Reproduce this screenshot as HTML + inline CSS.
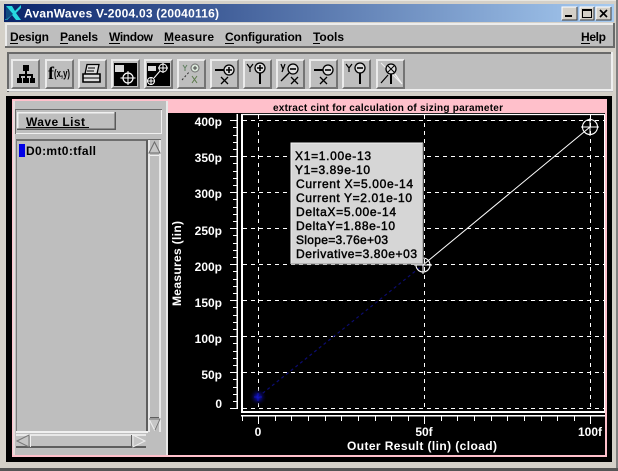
<!DOCTYPE html>
<html>
<head>
<meta charset="utf-8">
<title>AvanWaves</title>
<style>
html,body{margin:0;padding:0;background:#d4d0c8;width:618px;height:471px;overflow:hidden}
svg{display:block;position:absolute;left:0;top:0}
text{font-family:"Liberation Sans",sans-serif;font-weight:bold}
.m{font-size:12px;fill:#000}
.w{font-size:12px;fill:#fff}
.p{font-size:12px;fill:#000;font-weight:normal;stroke:#000;stroke-width:.45}
</style>
</head>
<body>
<svg width="618" height="471" viewBox="0 0 618 471" xmlns="http://www.w3.org/2000/svg">
<defs>
<linearGradient id="tb" x1="0" x2="1" y1="0" y2="0"><stop offset="0" stop-color="#0a246a"/><stop offset="1" stop-color="#a6caf0"/></linearGradient>
<radialGradient id="blob"><stop offset="0" stop-color="#1818d8"/><stop offset=".3" stop-color="#0a0a80"/><stop offset="1" stop-color="#000" stop-opacity="0"/></radialGradient>
<symbol id="bevel" width="29" height="30" overflow="visible">
<rect x="0" y="0" width="29" height="30" fill="#bebebe"/>
<path d="M0 0H29L27 2H2V28L0 30Z" fill="#ebebeb"/>
<path d="M29 0V30H0L2 28H27V2Z" fill="#747474"/>
</symbol>
</defs>

<!-- window -->
<rect width="618" height="471" fill="#d4d0c8"/>
<rect x="0" y="0" width="618" height="1" fill="#e8e6e0"/>
<rect x="616" y="0" width="2" height="471" fill="#808080"/>
<rect x="0" y="468" width="618" height="3" fill="#555"/>
<rect x="4" y="4" width="610" height="18" fill="url(#tb)"/>
<!-- logo -->
<path d="M6 6L12 6L15 11L21 5V8L16 13L21 20H16L12 15L7 20H5L11 13Z" fill="#27d8e0"/>
<path d="M6 6L13 14L6 20Z" fill="#0f4a80"/>
<text x="24" y="17.500" font-size="12" fill="#fff" textLength="195" lengthAdjust="spacing">AvanWaves V-2004.03 (20040116)</text>
<!-- window buttons -->
<g>
<path d="M562 7H577V20H562Z" fill="#d4d0c8"/>
<path d="M562 20V7H577" fill="none" stroke="#fff"/>
<path d="M577 7V20H562" fill="none" stroke="#404040"/>
<rect x="565" y="15" width="7" height="2" fill="#000"/>
<path d="M580 7H594V20H580Z" fill="#d4d0c8"/>
<path d="M580 20V7H594" fill="none" stroke="#fff"/>
<path d="M594 7V20H580" fill="none" stroke="#404040"/>
<rect x="582.500" y="9.500" width="9" height="8" fill="none" stroke="#000"/>
<rect x="582" y="9" width="10" height="2" fill="#000"/>
<path d="M596 7H611V20H596Z" fill="#d4d0c8"/>
<path d="M596 20V7H611" fill="none" stroke="#fff"/>
<path d="M611 7V20H596" fill="none" stroke="#404040"/>
<path d="M600 10L607 17M607 10L600 17" stroke="#000" stroke-width="1.600"/>
</g>

<!-- menu bar -->
<rect x="5" y="23" width="610" height="25" fill="#bebebe"/>
<rect x="5" y="23" width="610" height="2" fill="#ececec"/>
<rect x="5" y="23" width="2" height="25" fill="#ececec"/>
<rect x="5" y="46" width="610" height="2" fill="#6a6a6a"/>
<rect x="613" y="23" width="2" height="25" fill="#6a6a6a"/>
<text class="m" x="10" y="41" textLength="39">Design</text><rect x="10" y="43" width="8" height="1" fill="#000"/>
<text class="m" x="60" y="41" textLength="38">Panels</text><rect x="60" y="43" width="8" height="1" fill="#000"/>
<text class="m" x="109" y="41" textLength="44">Window</text><rect x="109" y="43" width="11" height="1" fill="#000"/>
<text class="m" x="164" y="41" textLength="50">Measure</text><rect x="164" y="43" width="10" height="1" fill="#000"/>
<text class="m" x="225" y="41" textLength="77">Configuration</text><rect x="225" y="43" width="9" height="1" fill="#000"/>
<text class="m" x="313" y="41" textLength="31">Tools</text><rect x="313" y="43" width="7" height="1" fill="#000"/>
<text class="m" x="581" y="41" textLength="25">Help</text><rect x="581" y="43" width="9" height="1" fill="#000"/>

<!-- toolbar -->
<rect x="7" y="52" width="606" height="40" fill="#bebebe"/>
<rect x="7" y="52" width="606" height="2" fill="#6a6a6a"/>
<rect x="7" y="52" width="2" height="40" fill="#6a6a6a"/>
<rect x="7" y="89" width="606" height="2" fill="#efefef"/>
<rect x="611" y="52" width="2" height="39" fill="#efefef"/>

<use href="#bevel" x="11" y="59"/>
<use href="#bevel" x="45" y="59"/>
<use href="#bevel" x="78" y="59"/>
<use href="#bevel" x="111" y="59"/>
<use href="#bevel" x="144" y="59"/>
<use href="#bevel" x="177" y="59"/>
<use href="#bevel" x="210" y="59"/>
<use href="#bevel" x="243" y="59"/>
<use href="#bevel" x="276" y="59"/>
<use href="#bevel" x="309" y="59"/>
<use href="#bevel" x="342" y="59"/>
<use href="#bevel" x="376" y="59"/>

<!-- tree icon -->
<g fill="#000">
<rect x="23" y="65" width="6" height="6"/><rect x="25" y="71" width="2" height="4"/>
<rect x="19" y="74" width="14" height="2"/><rect x="19" y="74" width="2" height="4"/><rect x="25" y="74" width="2" height="4"/><rect x="31" y="74" width="2" height="4"/>
<rect x="17" y="78" width="5" height="5"/><rect x="23" y="78" width="6" height="5"/><rect x="30" y="78" width="5" height="5"/>
</g>
<!-- f(x,y) -->
<text x="48" y="79" font-size="18" font-family="Liberation Serif" fill="#000" style="font-family:'Liberation Serif',serif">f</text>
<text x="54" y="77" font-size="11" fill="#000" textLength="16" lengthAdjust="spacingAndGlyphs">(x,y)</text>
<!-- printer -->
<g fill="none" stroke="#000" stroke-width="1.300">
<path d="M87 64.500H99L97 74H85Z" fill="#ddd"/>
<path d="M88 68H95M87 71H94" stroke-width="1"/>
<path d="M83 74H100V82H83Z" fill="#ddd" stroke-width="1.600"/>
<path d="M83 78H100" stroke-width="1"/>
</g>
<!-- black panels -->
<rect x="114" y="63" width="23" height="23" fill="#000"/>
<rect x="115" y="65" width="9" height="7" fill="#d8d8d8"/>
<circle cx="128" cy="78" r="5" fill="none" stroke="#fff" stroke-width="1.200"/>
<path d="M120.500 78H135.500M128 71V85" stroke="#fff" stroke-width="1"/>
<rect x="147" y="63" width="23" height="23" fill="#000"/>
<rect x="148" y="66" width="8" height="5" fill="#d8d8d8"/>
<circle cx="163" cy="68" r="4" fill="none" stroke="#fff"/><path d="M158 68H168M163 63V73" stroke="#fff"/>
<circle cx="151" cy="81" r="3.500" fill="none" stroke="#fff"/><path d="M147 81H155M151 77V85" stroke="#fff"/>
<path d="M154 78L160 71" stroke="#fff"/>
<!-- faded -->
<g fill="none" stroke-width="1">
<path d="M183 65L185 68L187 65M185 68V71" stroke="#5f7f5f"/>
<circle cx="195" cy="68" r="4" stroke="#707070" fill="#d9e6d9"/>
<path d="M193 68H197M195 66V70" stroke="#444"/>
<path d="M182 80L190 71" stroke="#333" stroke-dasharray="2 2"/>
<path d="M192 76L197 83M197 76L192 83" stroke="#5b7a4a"/>
</g>
<!-- cursor icons -->
<g fill="none" stroke="#000">
<circle cx="229" cy="70" r="5" fill="#ddd" stroke-width="1.300"/>
<path d="M226 70H232M229 67V73" stroke-width="1.600"/>
<path d="M215 70H224" stroke-width="2"/>
<path d="M221 77L228 84M228 77L221 84" stroke-width="1.300"/>
<path d="M247 64L250 68L253 64M250 68V72" stroke-width="1.200"/>
<circle cx="260" cy="68" r="5" fill="#ddd" stroke-width="1.300"/>
<path d="M257 68H263M260 65V71" stroke-width="1.600"/>
<path d="M260 73V84" stroke-width="2"/>
<path d="M281 64L283 69M285 64L282 72" stroke-width="1.200"/>
<circle cx="293" cy="69" r="5" fill="#ddd" stroke-width="1.300"/>
<path d="M290 69H296" stroke-width="1.600"/>
<path d="M281 81L289 73" stroke-width="1.300"/>
<path d="M291 77L298 84M298 77L291 84" stroke-width="1.300"/>
<circle cx="328" cy="70" r="5" fill="#ddd" stroke-width="1.300"/>
<path d="M325 70H331" stroke-width="1.600"/>
<path d="M314 70H323" stroke-width="2"/>
<path d="M320 77L327 84M327 77L320 84" stroke-width="1.300"/>
<path d="M346 64L349 68L352 64M349 68V72" stroke-width="1.200"/>
<circle cx="360" cy="68" r="5" fill="#ddd" stroke-width="1.300"/>
<path d="M357 68H363" stroke-width="1.600"/>
<path d="M360 73V84" stroke-width="2"/>
<path d="M381 63L401 83" stroke="#f0f0f0" stroke-width="1"/>
<path d="M381 83L388 75" stroke-width="1.200"/>
<path d="M395 74L402 84" stroke="#f4f4f4" stroke-width="1.200"/>
<circle cx="391" cy="69" r="5" fill="#ddd" stroke-width="1.300"/>
<path d="M388 66L394 72M394 66L388 72" stroke-width="1"/>
<path d="M391 74V84" stroke-width="2"/>
</g>

<!-- main black area -->
<rect x="6" y="96" width="606" height="366" fill="#000"/>
<rect x="12" y="99" width="595" height="358" fill="#ffc0cb"/>
<rect x="14" y="101" width="591" height="354" fill="#000"/>
<!-- left pane -->
<rect x="13" y="101" width="155" height="354" fill="#bebebe"/>
<rect x="13" y="101" width="2" height="354" fill="#e8dcdc"/>
<rect x="166" y="101" width="2" height="354" fill="#e8e8e8"/>
<!-- Wave list group -->
<rect x="15.500" y="109.500" width="146" height="24" fill="#bebebe" stroke="#6a6a6a"/>
<rect x="16" y="133" width="146" height="1" fill="#f0f0f0"/>
<rect x="161" y="110" width="1" height="24" fill="#f0f0f0"/>
<rect x="17" y="112" width="99" height="18" fill="#bebebe"/>
<path d="M17 112H116V113.500H18.500V130H17Z" fill="#f0f0f0"/>
<path d="M116 112V130H17V128.500H114.500V112Z" fill="#5a5a5a"/>
<text class="m" x="26" y="126" textLength="59" lengthAdjust="spacing">Wave List</text>
<rect x="26" y="127" width="63" height="1" fill="#000"/>
<!-- list -->
<rect x="16" y="140" width="131" height="292" fill="#bebebe"/>
<rect x="16" y="139" width="132" height="2" fill="#6e6e6e"/>
<rect x="16" y="140" width="1" height="292" fill="#7a7a7a"/>
<rect x="146" y="140" width="2" height="292" fill="#5e5e5e"/>
<rect x="16" y="431" width="132" height="2" fill="#f0f0f0"/>
<rect x="19" y="144" width="6" height="13" fill="#0000e6"/>
<text class="m" x="26" y="155" textLength="70" lengthAdjust="spacing">D0:mt0:tfall</text>
<!-- v scrollbar -->
<rect x="148" y="140" width="14" height="292" fill="#bebebe"/>
<rect x="148" y="140" width="2" height="292" fill="#e8e8e8"/>
<rect x="159" y="140" width="2" height="292" fill="#e8e8e8"/>
<rect x="148" y="139" width="13" height="1" fill="#6a6a6a"/>
<path d="M154.500 142L160 153H149Z" fill="#c6c6c6" stroke="#6a6a6a"/>
<rect x="150" y="155" width="9" height="1" fill="#f0f0f0"/>
<rect x="150" y="417" width="9" height="1" fill="#5e5e5e"/>
<path d="M149 419H160L154.500 430Z" fill="#c6c6c6" stroke="#eee"/>
<path d="M149 419H160L155 430" fill="none" stroke="#777"/>
<!-- h scrollbar -->
<rect x="16" y="434" width="130" height="15" fill="#c0c0c0"/>
<rect x="16" y="434" width="130" height="2" fill="#e8e8e8"/>
<rect x="16" y="446" width="130" height="2" fill="#5e5e5e"/>
<path d="M17 441L29 435V447Z" fill="#c6c6c6" stroke="#777"/>
<rect x="30" y="435" width="1" height="12" fill="#f0f0f0"/>
<rect x="131" y="435" width="1" height="12" fill="#5e5e5e"/>
<path d="M133 435L145 441L133 447Z" fill="#c6c6c6" stroke="#eee"/>

<!-- plot -->
<rect x="168" y="101" width="437" height="12" fill="#ffc0cb"/>
<text x="273" y="111" font-size="10" fill="#000" textLength="230" lengthAdjust="spacing">extract cint for calculation of sizing parameter</text>

<!-- frame -->
<path d="M241.500 114.500H604.500" stroke="#fff" stroke-width="1.200"/>
<rect x="241" y="114" width="2" height="299" fill="#fff"/>
<rect x="241" y="411" width="364" height="2" fill="#fff"/>
<rect x="241" y="415" width="364" height="1.500" fill="#fff"/>
<rect x="604" y="114" width="1" height="299" fill="#fff"/>

<!-- grid -->
<g stroke="#fff" stroke-width="1" stroke-dasharray="4 4" fill="none">
<path d="M243 120.500H604"/>
<path d="M243 156.500H604"/>
<path d="M243 192.500H604"/>
<path d="M243 228.500H604"/>
<path d="M243 264.500H604"/>
<path d="M243 300.500H604"/>
<path d="M243 336.500H604"/>
<path d="M243 372.500H604"/>
<path d="M243 408.500H604"/>
<path d="M258.500 115V411"/>
<path d="M424.500 115V411"/>
<path d="M590.500 115V411"/>
</g>

<!-- y axis -->
<rect x="236.500" y="114" width="1.500" height="295" fill="#fff"/>
<g stroke="#fff" stroke-width="1" fill="none">
<path d="M230 120.500H237M233 127.500H237M233 135.500H237M233 142.500H237M233 149.500H237
M230 156.500H237M233 163.500H237M233 171.500H237M233 178.500H237M233 185.500H237
M230 192.500H237M233 199.500H237M233 207.500H237M233 214.500H237M233 221.500H237
M230 228.500H237M233 235.500H237M233 243.500H237M233 250.500H237M233 257.500H237
M230 264.500H237M233 271.500H237M233 279.500H237M233 286.500H237M233 293.500H237
M230 300.500H237M233 307.500H237M233 315.500H237M233 322.500H237M233 329.500H237
M230 336.500H237M233 343.500H237M233 351.500H237M233 358.500H237M233 365.500H237
M230 372.500H237M233 379.500H237M233 387.500H237M233 394.500H237M233 401.500H237
M230 408.500H237"/>
</g>
<!-- x axis ticks -->
<g stroke="#fff" stroke-width="1" fill="none">
<path d="M242.500 416V421M258.500 416V424M275.500 416V421M291.500 416V421M308.500 416V421M325.500 416V421M341.500 416V421M358.500 416V421M375.500 416V421M391.500 416V421M424.500 416V424M408.500 416V421M441.500 416V421M457.500 416V421M474.500 416V421M491.500 416V421M507.500 416V421M524.500 416V421M541.500 416V421M557.500 416V421M574.500 416V421M590.500 416V424"/>
</g>

<!-- y labels -->
<g text-anchor="end">
<text class="w" x="222" y="126">400p</text>
<text class="w" x="222" y="162">350p</text>
<text class="w" x="222" y="198">300p</text>
<text class="w" x="222" y="235">250p</text>
<text class="w" x="222" y="271">200p</text>
<text class="w" x="222" y="307">150p</text>
<text class="w" x="222" y="343">100p</text>
<text class="w" x="222" y="379">50p</text>
<text class="w" x="222" y="408">0</text>
</g>
<text class="w" transform="translate(181,306) rotate(-90)" textLength="85">Measures (lin)</text>
<text class="w" x="258" y="436" text-anchor="middle">0</text>
<text class="w" x="424" y="436" text-anchor="middle">50f</text>
<text class="w" x="590" y="436" text-anchor="middle">100f</text>
<text class="w" x="347" y="450" textLength="150" lengthAdjust="spacing">Outer Result (lin) (cload)</text>

<!-- curves -->
<circle cx="258" cy="397" r="9" fill="url(#blob)"/>
<path d="M258 397L423 265" stroke="#0c0c70" stroke-width="1.200" stroke-dasharray="3 3" fill="none"/>
<path d="M254 397H262M258 393V401" stroke="#1818d0" stroke-width="1" opacity=".7"/>
<path d="M423 265L590 127" stroke="#fff" stroke-width="1" fill="none"/>
<circle cx="423" cy="265" r="7" fill="none" stroke="#fff" stroke-width="1.100"/>
<path d="M414 265H432M423 256V274" stroke="#fff"/>
<circle cx="590" cy="127" r="7.500" fill="none" stroke="#fff" stroke-width="1.100"/>
<path d="M581 127H599M590 118V136" stroke="#fff"/>

<!-- popup -->
<rect x="291" y="143" width="132" height="121" fill="#d6d6d6"/>
<path d="M291 264V143H423" fill="none" stroke="#f2f2f2"/>
<path d="M423 143V264H291" fill="none" stroke="#8a8a8a"/>
<text class="p" x="295" y="160" textLength="76">X1=1.00e-13</text>
<text class="p" x="295" y="174" textLength="75">Y1=3.89e-10</text>
<text class="p" x="296" y="188" textLength="117">Current X=5.00e-14</text>
<text class="p" x="296" y="202" textLength="116">Current Y=2.01e-10</text>
<text class="p" x="296" y="216" textLength="100">DeltaX=5.00e-14</text>
<text class="p" x="296" y="230" textLength="99">DeltaY=1.88e-10</text>
<text class="p" x="296" y="244" textLength="92">Slope=3.76e+03</text>
<text class="p" x="296" y="258" textLength="121">Derivative=3.80e+03</text>
</svg>
</body>
</html>
